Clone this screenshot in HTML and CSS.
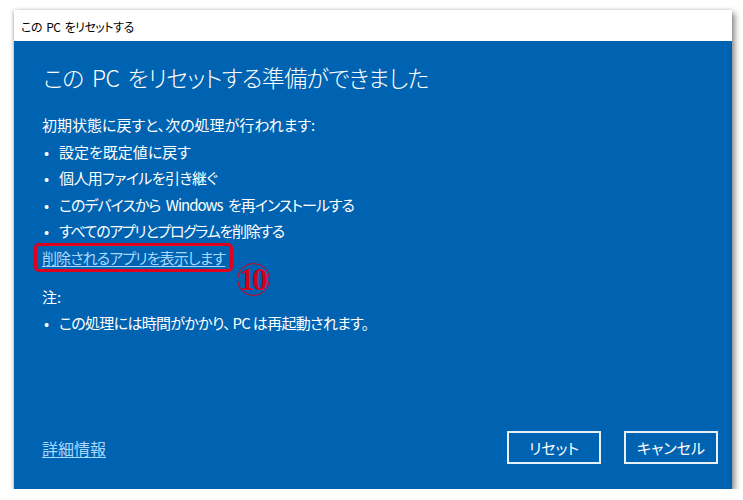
FILE: index.html
```html
<!DOCTYPE html>
<html lang="ja">
<head>
<meta charset="utf-8">
<link rel="stylesheet" href="styles.css">
</head>
<body>
<div class="window">
  <div class="titlebar">この PC をリセットする</div>
  <div class="content">
    <div class="main">
      <h1 class="heading">この PC をリセットする準備ができました</h1>
      <p class="line">初期状態に戻すと、次の処理が行われます:</p>
      <ul class="list">
        <li>設定を既定値に戻す</li>
        <li class="t1">個人用ファイルを引き継ぐ</li>
        <li class="t2">このデバイスから Windows を再インストールする</li>
        <li class="t3">すべてのアプリとプログラムを削除する</li>
      </ul>
      <div class="linkrow">
        <span class="marked">
          <a class="link tight" href="#">削除されるアプリを表示します</a>
          <span class="redbox"></span>
          <span class="badge">10</span>
        </span>
      </div>
      <p class="line note">注:</p>
      <ul class="list">
        <li class="t4">この処理には時間がかかり、 PC は再起動されます。</li>
      </ul>
    </div>
    <div class="footer">
      <a class="link more" href="#">詳細情報</a>
      <div class="buttons">
        <button class="btn">リセット</button>
        <button class="btn">キャンセル</button>
      </div>
    </div>
  </div>
</div>
</body>
</html>
```

FILE: styles.css
```css
html, body {
  margin: 0;
  padding: 0;
  background: #ffffff;
}
body {
  font-family: "Noto Sans CJK JP", "Noto Sans", sans-serif;
  font-feature-settings: "palt";
  padding: 10px 0 0 14px;
}
.window {
  width: 718px;
  height: 479px;
  display: flex;
  flex-direction: column;
  box-shadow: 3px 3px 6px rgba(0, 0, 0, 0.45), -1px 0 3px rgba(0, 0, 0, 0.2);
}
.titlebar {
  height: 31px;
  background: #ffffff;
  font-size: 12px;
  letter-spacing: -0.5px;
  word-spacing: 2px;
  color: #000;
  display: flex;
  align-items: center;
  padding-left: 7px;
  padding-top: 1px;
  box-sizing: border-box;
}
.content {
  flex: 1;
  background: #0063b1;
  color: #ffffff;
  padding: 19px 14px 25px 28px;
  display: flex;
  flex-direction: column;
}
.main {
  flex: 1;
}
.heading {
  margin: 0 0 18px 1px;
  font-size: 23px;
  font-weight: 300;
  line-height: 34px;
  letter-spacing: -0.7px;
  word-spacing: 4px;
}
.line {
  margin: 0;
  font-size: 15px;
  line-height: 26.5px;
  font-weight: 400;
}
.list {
  margin: 0;
  padding: 0;
  list-style: none;
  font-size: 15px;
  line-height: 26.5px;
  word-spacing: 3px;
}
.list li {
  display: flex;
  padding-left: 2px;
}
.list li::before {
  content: "•";
  width: 15px;
  flex: none;
  letter-spacing: 0;
}
.list .t1 { letter-spacing: -0.6px; }
.list .t2 { letter-spacing: -1px; }
.list .t3 { letter-spacing: -1.3px; }
.list .t4 { letter-spacing: -0.7px; word-spacing: 0; }
.linkrow {
  font-size: 15px;
  line-height: 26.5px;
  margin-bottom: 12.5px;
}
.marked {
  position: relative;
  display: inline-block;
}
.link {
  color: #a6d8ff;
  text-decoration: underline;
  text-underline-offset: 2px;
  font-size: 15px;
}
.link.tight {
  letter-spacing: -0.9px;
}
.link.more {
  font-size: 16px;
}
.redbox {
  position: absolute;
  left: -8px;
  top: -2px;
  width: 199px;
  height: 29px;
  border: 3px solid #e0001b;
  border-radius: 5px;
  box-sizing: border-box;
}
.badge {
  position: absolute;
  left: 195px;
  top: 18px;
  width: 33px;
  height: 33px;
  border: 1.5px solid #d5001c;
  border-radius: 50%;
  box-sizing: border-box;
  color: #d5001c;
  font-family: "Liberation Serif", "DejaVu Serif", serif;
  font-weight: bold;
  font-size: 32px;
  letter-spacing: -3px;
  line-height: 31px;
  text-align: center;
  text-indent: -3px;
}
.footer {
  display: flex;
  align-items: center;
  justify-content: space-between;
}
.buttons {
  display: flex;
  gap: 23px;
}
.btn {
  width: 94px;
  height: 33px;
  background: transparent;
  border: 2px solid #e8f0f8;
  color: #ffffff;
  font-family: "Noto Sans CJK JP", "Noto Sans", sans-serif;
  font-feature-settings: "palt";
  font-size: 15px;
  padding: 0;
}
```
